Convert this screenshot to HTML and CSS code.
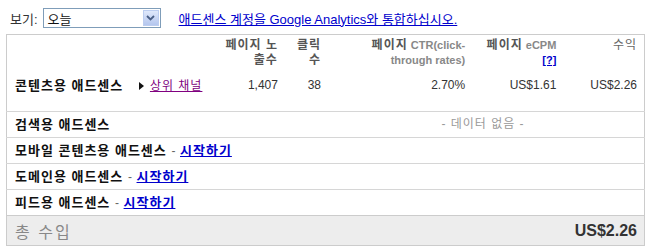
FILE: index.html
```html
<!DOCTYPE html>
<html lang="ko">
<head>
  <meta charset="UTF-8">
  <meta name="viewport" content="width=device-width, initial-scale=1.0">
  <title>애드센스 수익 요약</title>
  <link rel="stylesheet" href="styles.css">
</head>
<body>
  <div class="toolbar">
    <span class="view-label">보기:</span>
    <div class="fake-select">
      <span class="fake-select-value">오늘</span>
      <span class="fake-select-btn">
        <svg width="9" height="6" viewBox="0 0 9 6"><path d="M1 1 L4.5 4.5 L8 1" fill="none" stroke="#4a5f86" stroke-width="1.8"/></svg>
      </span>
    </div>
    <a class="ga-link" href="#">애드센스 계정을 Google Analytics와 통합하십시오.</a>
  </div>

  <table class="earnings">
    <colgroup>
      <col class="c-label">
      <col class="c-views">
      <col class="c-clicks">
      <col class="c-ctr">
      <col class="c-ecpm">
      <col class="c-rev">
    </colgroup>
    <tr class="head">
      <th></th>
      <th class="views"><span class="ko">페이지 노출수</span></th>
      <th><span class="ko">클릭 수</span></th>
      <th><span class="ko">페이지</span> CTR(click-through rates)</th>
      <th><span class="ko">페이지</span> eCPM <a class="help" href="#">[?]</a></th>
      <th><span class="ko light">수익</span></th>
    </tr>
    <tr class="main-row">
      <td class="label">콘텐츠용 애드센스 <span class="arrow"></span><a class="channel" href="#">상위 채널</a></td>
      <td>1,407</td>
      <td>38</td>
      <td>2.70%</td>
      <td>US$1.61</td>
      <td>US$2.26</td>
    </tr>
    <tr class="row">
      <td class="label" colspan="3">검색용 애드센스</td>
      <td class="nodata" colspan="3">- 데이터 없음 -</td>
    </tr>
    <tr class="row">
      <td class="label" colspan="6">모바일 콘텐츠용 애드센스 <span class="dash">-</span> <a class="start" href="#">시작하기</a></td>
    </tr>
    <tr class="row">
      <td class="label" colspan="6">도메인용 애드센스 <span class="dash">-</span> <a class="start" href="#">시작하기</a></td>
    </tr>
    <tr class="row">
      <td class="label" colspan="6">피드용 애드센스 <span class="dash">-</span> <a class="start" href="#">시작하기</a></td>
    </tr>
    <tr class="total">
      <td class="total-label" colspan="3">총 수입</td>
      <td class="total-value" colspan="3">US$2.26</td>
    </tr>
  </table>
</body>
</html>
```

FILE: styles.css
```css
body {
  margin: 0;
  padding: 0 6px;
  font-family: "Liberation Sans", "Noto Sans CJK KR", sans-serif;
  font-size: 12px;
  color: #222;
  background: #fff;
}
.toolbar {
  display: flex;
  align-items: center;
  height: 20px;
  padding: 8px 0 6px 4px;
}
.view-label {
  font-size: 13px;
  color: #333;
  margin-right: 5px;
}
.fake-select {
  width: 116px;
  height: 18px;
  border: 1px solid #7f9db9;
  display: flex;
  align-items: center;
  justify-content: space-between;
  background: #fff;
}
.fake-select-value {
  font-size: 13px;
  padding-left: 4px;
  color: #111;
}
.fake-select-btn {
  width: 16px;
  height: 16px;
  margin-right: 1px;
  display: flex;
  align-items: center;
  justify-content: center;
  background: linear-gradient(#dfe8fb, #b4c6ee);
  border: 1px solid #bccdf0;
  box-sizing: border-box;
}
.ga-link {
  margin-left: 18px;
  font-size: 13px;
  color: #0000cc;
}
.earnings {
  width: 639px;
  border-collapse: collapse;
  border: 1px solid #ccc;
  table-layout: fixed;
}
.c-label { width: 198px; }
.c-views { width: 80px; }
.c-clicks { width: 43px; }
.c-ctr { width: 144px; }
.c-ecpm { width: 91px; }
.c-rev { width: 81px; }
th {
  font-size: 11px;
  font-weight: bold;
  color: #888;
  text-align: right;
  vertical-align: top;
  line-height: 15px;
  padding: 3px 7px 2px 6px;
  height: 30px;
}
th.views {
  padding-left: 16px;
}
th .ko {
  font-size: 12px;
  line-height: 15px;
  letter-spacing: 1px;
  color: #555;
}
th .light {
  font-weight: normal;
  color: #666;
}
.help {
  color: #0000cc;
}
td {
  padding: 0 7px 0 6px;
  text-align: right;
  color: #333;
}
.main-row td {
  height: 33px;
  padding-top: 8px;
  vertical-align: top;
  line-height: 15px;
}
.row td {
  height: 25px;
  border-top: 1px solid #d6d6d6;
  line-height: 15px;
}
td.label {
  text-align: left;
  padding-left: 8px;
  font-size: 13px;
  font-weight: bold;
  letter-spacing: 1px;
  color: #111;
  white-space: nowrap;
}
.arrow {
  display: inline-block;
  width: 0;
  height: 0;
  border-top: 4px solid transparent;
  border-bottom: 4px solid transparent;
  border-left: 5px solid #111;
  margin: 0 6px 0 11px;
}
.channel {
  font-weight: normal;
  font-size: 12px;
  letter-spacing: 1px;
  color: #800080;
}
.dash {
  font-weight: normal;
  color: #666;
  font-size: 12px;
  letter-spacing: 0;
}
.start {
  color: #0000cc;
  letter-spacing: 1px;
}
.nodata {
  text-align: center;
  color: #999;
  letter-spacing: 1px;
  padding-right: 12px;
}
.total td {
  height: 29px;
  background: #ededed;
  border-top: 1px solid #ccc;
}
.total-label {
  text-align: left;
  padding-left: 8px;
  font-size: 16px;
  letter-spacing: 2px;
  color: #888;
}
.total-value {
  font-size: 16px;
  font-weight: bold;
  color: #333;
}
```
